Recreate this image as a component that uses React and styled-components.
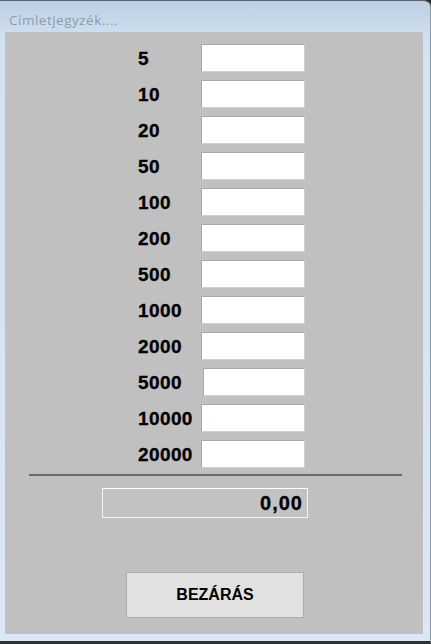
import React from "react";
import styled, { createGlobalStyle } from "styled-components";

const Global = createGlobalStyle`
  html, body { margin: 0; padding: 0; background: #2b2b2b; }
  body { font-family: "Liberation Sans", Arial, sans-serif; }
`;

const Window = styled.div`
  width: 431px;
  height: 644px;
  box-sizing: border-box;
  display: flex;
  flex-direction: column;
  background: linear-gradient(to bottom, #bccfe4 0px, #d3e1f0 40px, #dbe7f4 100%);
  border-top: 1px solid #5a6470;
  border-right: 1px solid #8a98a8;
  border-bottom: 3px solid #2f3338;
  border-top-right-radius: 7px;
  overflow: hidden;
`;

const TitleBar = styled.div`
  height: 31px;
  flex: none;
  display: flex;
  align-items: center;
  padding-left: 9px;
  padding-top: 6px;
  box-sizing: border-box;
  font-family: "Open Sans", "Noto Sans", sans-serif;
  font-size: 13.5px;
  letter-spacing: 0.5px;
  color: #8c9cae;
`;

const Panel = styled.div`
  flex: 1;
  margin: 0 7px 7px 5px;
  background: #c0c0c0;
  display: flex;
  flex-direction: column;
`;

const Form = styled.div`
  display: flex;
  flex-direction: column;
  gap: 8px;
  padding: 12px 0 0 133px;
`;

const Row = styled.div`
  display: grid;
  grid-template-columns: 63px 104px;
  align-items: center;
  height: 28px;
`;

const Label = styled.span`
  font-weight: bold;
  font-size: 19px;
  letter-spacing: 0.4px;
  color: #000;
  padding-top: 2px;
  -webkit-text-stroke: 0.3px #000;
`;

const Field = styled.div`
  height: 28px;
  box-sizing: border-box;
  background: #fff;
  border: 1px solid #a8a8a8;
  border-right-color: #d0d0d0;
  border-bottom-color: #d0d0d0;
  margin-left: ${(p) => p.$shift || 0}px;
`;

const Separator = styled.div`
  height: 2px;
  background: #6a6a6a;
  margin: 6px 21px 0 24px;
`;

const Total = styled.div`
  margin: 12px 0 0 97px;
  width: 206px;
  height: 30px;
  box-sizing: border-box;
  border: 1px solid #f4f4f4;
  border-top-color: #ffffff;
  background: #c2c2c2;
  display: flex;
  align-items: center;
  justify-content: flex-end;
  padding-right: 4px;
  font-weight: bold;
  font-size: 20px;
  letter-spacing: 1px;
  color: #000;
  -webkit-text-stroke: 0.3px #000;
`;

const Button = styled.button`
  margin: 54px 0 0 121px;
  width: 178px;
  height: 46px;
  background: #e1e1e1;
  border: 1px solid #adadad;
  font-family: "Liberation Sans", Arial, sans-serif;
  font-weight: bold;
  font-size: 16px;
  color: #000;
  padding: 0;
  cursor: pointer;
`;

const values = ["5", "10", "20", "50", "100", "200", "500", "1000", "2000", "5000", "10000", "20000"];

export default function App() {
  return (
    <>
      <Global />
      <Window>
        <TitleBar>Címletjegyzék....</TitleBar>
        <Panel>
          <Form>
            {values.map((v) => (
              <Row key={v}>
                <Label>{v}</Label>
                <Field $shift={v === "5000" ? 2 : 0} />
              </Row>
            ))}
          </Form>
          <Separator />
          <Total>0,00</Total>
          <Button>BEZÁRÁS</Button>
        </Panel>
      </Window>
    </>
  );
}
